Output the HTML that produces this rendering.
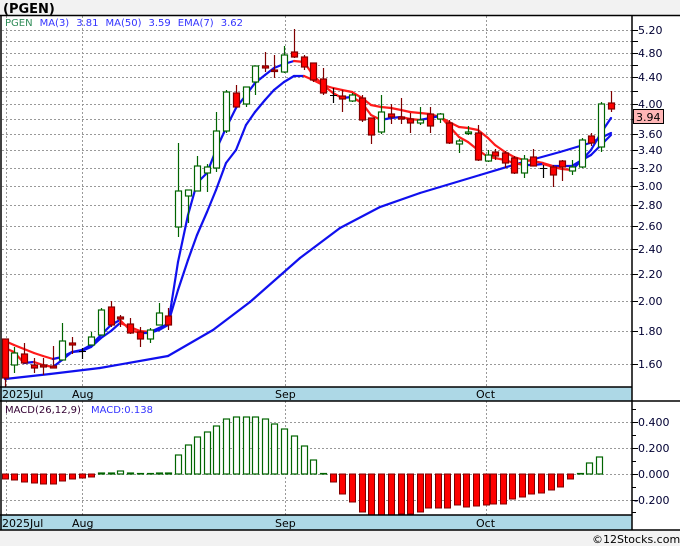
<!DOCTYPE html>
<html><head><meta charset="utf-8">
<style>
html,body{margin:0;padding:0;background:#f2f2f2;}
body{width:680px;height:546px;overflow:hidden;position:relative;font-family:"DejaVu Sans","Liberation Sans",sans-serif;}
svg{position:absolute;left:0;top:0;}
text{font-family:"DejaVu Sans","Liberation Sans",sans-serif;}
</style></head><body>
<svg id="s" width="680" height="546" xmlns="http://www.w3.org/2000/svg">
<rect x="0" y="0" width="680" height="546" fill="#f2f2f2"/>
<rect x="0" y="15" width="680" height="515" fill="#ffffff"/>
<g id="grid"></g>
<g id="lines"></g>
<g id="candles"></g>
<g id="macd"></g>
<rect x="0" y="387" width="632" height="14" fill="#add8e6"/>
<rect x="0" y="515" width="632" height="15" fill="#add8e6"/>
<g stroke="#000" stroke-width="1.5" fill="none">
<line x1="0" y1="15.5" x2="680" y2="15.5"/>
<line x1="0" y1="387" x2="632" y2="387"/>
<line x1="0" y1="401" x2="680" y2="401"/>
<line x1="0" y1="515" x2="632" y2="515"/>
<line x1="0" y1="530" x2="680" y2="530"/>
<line x1="1" y1="15" x2="1" y2="530"/>
<line x1="632" y1="15" x2="632" y2="530"/>
</g>
<g id="ticks" stroke="#000" stroke-width="1"></g>
<text x="3" y="13" font-size="13" font-weight="bold" fill="#000">(PGEN)</text>
<text x="5" y="26" font-size="10"><tspan fill="#2e8b57">PGEN</tspan><tspan fill="#3333ff" dx="7">MA(3)</tspan><tspan fill="#3333ff" dx="7">3.81</tspan><tspan fill="#3333ff" dx="7">MA(50)</tspan><tspan fill="#3333ff" dx="7">3.59</tspan><tspan fill="#3333ff" dx="7">EMA(7)</tspan><tspan fill="#3333ff" dx="7">3.62</tspan></text>
<text x="5" y="413" font-size="10"><tspan fill="#330033">MACD(26,12,9)</tspan><tspan fill="#3333ff" dx="10">MACD:0.138</tspan></text>
<g font-size="11" fill="#000">
<text x="2" y="398">2025Jul</text><text x="72" y="398">Aug</text><text x="275" y="398">Sep</text><text x="476" y="398">Oct</text>
<text x="2" y="527">2025Jul</text><text x="72" y="527">Aug</text><text x="275" y="527">Sep</text><text x="476" y="527">Oct</text>
</g>
<g id="plabels" font-size="11" fill="#000033"></g>
<rect x="633.5" y="109.5" width="30" height="14" fill="#ffb6b6" stroke="#000"/>
<text x="636" y="121" font-size="11" fill="#000">3.94</text>
<g font-size="11" fill="#000033">
<text x="638" y="426">0.400</text><text x="638" y="452">0.200</text><text x="638" y="478">0.000</text><text x="634" y="504">-0.200</text>
</g>
<text x="592" y="543" font-size="11" fill="#000">©12Stocks.com</text>
</svg>
<script>
var NS="http://www.w3.org/2000/svg";
function el(p,t,a){var e=document.createElementNS(NS,t);for(var k in a)e.setAttribute(k,a[k]);document.getElementById(p).appendChild(e);return e;}
function py(p){return 30+283.4*(Math.log(5.2)-Math.log(p));}
for(var i=0;i<=18;i++){var p=1.6+0.2*i;var y=Math.round(py(p))+0.5;
 el('grid','line',{x1:2,x2:632,y1:y,y2:y,stroke:'#999','stroke-dasharray':'2,2','stroke-width':1});
 el('ticks','line',{x1:632,x2:638,y1:y,y2:y});
}
[5.2,4.8,4.4,4.0,3.6,3.4,3.2,3.0,2.8,2.6,2.4,2.2,2.0,1.8,1.6].forEach(function(p){
 var t=el('plabels','text',{x:638,y:Math.round(py(p))+4});t.textContent=p.toFixed(2);});
[6,82,285,486].forEach(function(x){
 el('grid','line',{x1:x+.5,x2:x+.5,y1:16,y2:387,stroke:'#999','stroke-dasharray':'2,2'});
 el('grid','line',{x1:x+.5,x2:x+.5,y1:401,y2:515,stroke:'#999','stroke-dasharray':'2,2'});});
[422,448,474,500].forEach(function(y){
 el('grid','line',{x1:2,x2:632,y1:y+.5,y2:y+.5,stroke:'#999','stroke-dasharray':'2,2'});
 el('ticks','line',{x1:632,x2:638,y1:y+.5,y2:y+.5});});
[409,435,461,487,512].forEach(function(y){el('ticks','line',{x1:632,x2:636,y1:y+.5,y2:y+.5});});
var C=[
[5,339,339,378,387,'r'],[14,347,365,353,373,'g'],[24,343,354,363,363,'r'],[34,358,365,368,373,'r'],[43,358,365,367,375,'r'],
[53,346,366,368,368,'r'],[62,323,360,341,360,'g'],[72,337,343,345,354,'r'],[82,348,351,351,359,'b'],[91,332,345,337,345,'g'],
[101,308,335,310,335,'g'],[111,301,307,325,327,'r'],[120,315,317,319,327,'r'],[130,318,324,333,334,'r'],[140,327,332,339,347,'r'],
[150,328,339,330,343,'g'],[159,303,325,313,325,'g'],[168,308,316,325,330,'r'],[178,143,227,191,237,'g'],[188,190,196,190,223,'g'],
[197,156,191,166,191,'g'],[207,164,173,167,192,'g'],[216,112,168,131,172,'g'],[226,90,131,92,133,'g'],[236,85,93,107,107,'r'],
[246,87,104,87,107,'g'],[255,66,82,66,95,'g'],[265,52,66,68,72,'r'],[274,55,70,71,78,'r'],[284,46,72,55,73,'g'],
[294,29,52,57,58,'r'],[304,55,57,67,70,'r'],[313,63,63,80,82,'r'],[323,68,79,93,95,'r'],[333,88,95,95,103,'b'],
[342,90,96,99,112,'r'],[352,93,101,95,102,'g'],[362,95,98,120,122,'r'],[371,118,118,135,144,'r'],[381,95,132,112,134,'g'],
[391,104,114,117,124,'r'],[401,98,117,119,124,'r'],[410,113,119,123,133,'r'],[420,107,123,120,125,'g'],[430,107,114,126,133,'r'],
[440,113,119,114,123,'g'],[449,120,123,143,144,'r'],[459,139,144,141,153,'g'],[468,126,133,132,135,'g'],[478,125,133,160,161,'r'],
[488,150,161,155,162,'g'],[495,149,152,156,160,'r'],[505,151,153,163,168,'r'],[514,156,158,173,174,'r'],[524,155,173,159,178,'g'],
[533,149,157,166,166,'r'],[543,165,168,168,178,'b'],[553,165,167,175,187,'r'],[562,160,161,167,181,'r'],[572,160,171,167,175,'g'],
[582,138,167,140,168,'g'],[591,133,136,143,146,'r'],[601,102,147,104,152,'g'],[611,91,103,109,112,'r']];
C.forEach(function(c){var x=c[0],col=c[5]==='r'?'#800000':(c[5]==='g'?'#006400':'#000');
 el('candles','line',{x1:x+.5,x2:x+.5,y1:c[1],y2:c[4],stroke:col,'stroke-width':1.2});
 var t=Math.min(c[2],c[3]),b=Math.max(c[2],c[3]);
 if(c[5]==='b'){el('candles','line',{x1:x-3,x2:x+4,y1:t+.5,y2:t+.5,stroke:'#000'});}
 else el('candles','rect',{x:x-2.5,y:t,width:6,height:Math.max(b-t,1.5),fill:c[5]==='r'?'#ff0000':'#fff',stroke:col,'stroke-width':1.2});
});
function seg(pts,w,force){for(var i=1;i<pts.length;i++){var a=pts[i-1],b=pts[i];
 var col=force||(b[1]<=a[1]?'#1010ee':'#ff1a1a');
 el('lines','line',{x1:a[0],y1:a[1],x2:b[0],y2:b[1],stroke:col,'stroke-width':w,'stroke-linecap':'round'});}}
var F=[[5,348],[14,352],[24,363],[34,362],[43,365],[53,367],[62,360],[72,352],[82,350],[91,345],[101,335],[111,325],[120,320],[130,330],[140,333],[150,333],[159,330],[168,325],[178,262],[188,215],[197,183],[207,173],[216,150],[226,128],[236,108],[246,95],[255,83],[265,75],[274,68],[284,64],[294,61],[304,62],[313,75],[323,85],[333,93],[342,98],[352,97],[362,103],[371,115],[381,120],[391,118],[401,117],[410,119],[420,120],[430,118],[440,116],[449,126],[459,137],[468,142],[478,150],[488,157],[495,158],[505,160],[514,163],[524,165],[533,165],[543,164],[553,167],[562,169],[572,170],[582,160],[591,150],[601,133],[611,118]];
var S=[[5,341],[14,345],[24,349],[34,353],[43,356],[53,359],[62,357],[72,352],[82,351],[91,347],[101,338],[111,331],[120,323],[130,327],[140,331],[150,332],[159,328],[168,324],[178,290],[188,260],[197,235],[207,212],[216,190],[226,163],[236,150],[246,125],[255,112],[265,100],[274,90],[284,82],[294,76],[304,76],[313,80],[323,85],[333,88],[342,90],[352,92],[362,98],[371,105],[381,107],[391,108],[401,110],[410,112],[420,113],[430,114],[440,117],[449,122],[459,127],[468,128],[478,130],[488,138],[495,145],[505,152],[514,157],[524,160],[533,161],[543,163],[553,166],[562,166],[572,166],[582,160],[591,155],[601,145],[611,135]];
var M=[[5,379],[50,374],[100,368],[168,356],[213,330],[250,302],[300,258],[340,228],[380,207],[420,193],[440,187],[480,175],[520,163],[560,152],[590,143],[611,133]];
seg(M,2.2,'#1010ee');seg(S,2.2);seg(F,2.2);
var MV=[-5,-6,-8,-9,-10,-10,-7,-5,-4,-3,1,1,3,1,0.5,0.5,1,1,19,29,37,42,48,55,57,57,57,55,50,45,38,28,14,0,-8,-20,-28,-38,-42,-43,-42,-40,-40,-38,-34,-34,-34,-31,-33,-32,-31,-30,-30,-25,-23,-20,-19,-16,-13,-5,0,11,17];
for(var i=0;i<MV.length;i++){var x=C[i][0]-(i>=44?2:0);
 var v=MV[i];
 if(v<0)el('macd','rect',{x:x-2.5,y:474,width:6,height:-v,fill:'#ff0000',stroke:'#800000','stroke-width':1});
 else el('macd','rect',{x:x-2.5,y:474-Math.max(v,0.5),width:6,height:Math.max(v,0.5),fill:'#fff',stroke:'#006400','stroke-width':1.2});}
</script>
</body></html>
